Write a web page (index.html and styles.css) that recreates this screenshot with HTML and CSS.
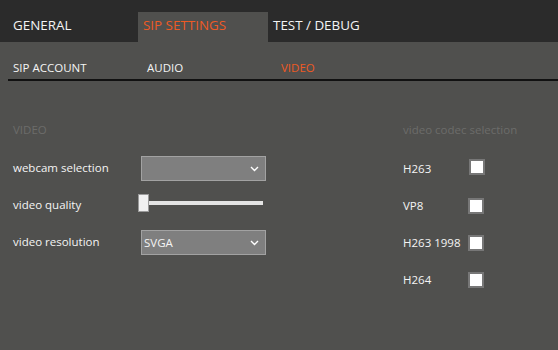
FILE: index.html
```html
<!DOCTYPE html>
<html lang="en">
<head>
    <meta charset="UTF-8">
    <title>SIP Settings - Video</title>
    <link rel="stylesheet" href="styles.css">
</head>
<body>
    <nav class="topbar">
        <div class="tab">GENERAL</div>
        <div class="tab active">SIP SETTINGS</div>
        <div class="tab">TEST / DEBUG</div>
    </nav>

    <nav class="subtabs">
        <div class="subtab">SIP ACCOUNT</div>
        <div class="subtab">AUDIO</div>
        <div class="subtab active">VIDEO</div>
    </nav>

    <main class="panel">
        <section class="video-settings">
            <h2 class="section-title">VIDEO</h2>

            <div class="row">
                <label class="row-label">webcam selection</label>
                <div class="dropdown">
                    <span class="dropdown-value"></span>
                    <svg class="chevron" width="9" height="6" viewBox="0 0 9 6"><polyline points="1,1 4.5,4.5 8,1" fill="none" stroke="#fff" stroke-width="1.4"/></svg>
                </div>
            </div>

            <div class="row">
                <label class="row-label">video quality</label>
                <div class="slider">
                    <div class="slider-thumb"></div>
                    <div class="slider-track"></div>
                </div>
            </div>

            <div class="row">
                <label class="row-label">video resolution</label>
                <div class="dropdown">
                    <span class="dropdown-value">SVGA</span>
                    <svg class="chevron" width="9" height="6" viewBox="0 0 9 6"><polyline points="1,1 4.5,4.5 8,1" fill="none" stroke="#fff" stroke-width="1.4"/></svg>
                </div>
            </div>
        </section>

        <section class="codec-settings">
            <h2 class="section-title lower">video codec selection</h2>

            <div class="row codec-row">
                <span class="codec-label">H263</span>
                <span class="checkbox first"></span>
            </div>
            <div class="row codec-row">
                <span class="codec-label">VP8</span>
                <span class="checkbox"></span>
            </div>
            <div class="row codec-row">
                <span class="codec-label">H263 1998</span>
                <span class="checkbox"></span>
            </div>
            <div class="row codec-row">
                <span class="codec-label">H264</span>
                <span class="checkbox"></span>
            </div>
        </section>
    </main>
</body>
</html>
```

FILE: styles.css
```css
:root {
    --bg: #50504e;
    --bar-bg: #2b2b2b;
    --accent: #ee5a24;
    --text: #f4f4f4;
    --muted: #6c6c6a;
    --field-bg: #7f7f7f;
    --field-border: #a2a2a2;
}

* {
    margin: 0;
    padding: 0;
    box-sizing: border-box;
}

body {
    font-family: 'Open Sans', 'Noto Sans', sans-serif;
    background-color: var(--bg);
    color: var(--text);
    width: 558px;
    height: 350px;
    overflow: hidden;
}

.topbar {
    background: var(--bar-bg);
    height: 42px;
    padding-left: 8px;
    display: flex;
    align-items: flex-end;
}

.tab {
    width: 130px;
    height: 30px;
    padding-left: 5px;
    font-size: 13.4px;
    line-height: 26px;
}

.tab.active {
    background: var(--bg);
    color: var(--accent);
}

.subtabs {
    display: flex;
    margin-left: 8px;
    padding-top: 18px;
    padding-bottom: 3px;
    border-bottom: 2px solid #111;
}

.subtab {
    width: 134px;
    padding-left: 5px;
    font-size: 11.5px;
    line-height: 16px;
}

.subtab.active {
    color: var(--accent);
}

.panel {
    display: flex;
    padding: 41px 0 0 13px;
}

.video-settings {
    width: 390px;
}

.section-title {
    font-size: 11.5px;
    font-weight: normal;
    line-height: 16px;
    color: var(--muted);
    margin-bottom: 12px;
}

.row {
    height: 37px;
    display: flex;
    align-items: center;
}

.row-label {
    width: 128px;
    font-size: 11.5px;
    line-height: 16px;
    padding-bottom: 1px;
}

.dropdown {
    width: 125px;
    height: 25px;
    background: var(--field-bg);
    border: 1px solid var(--field-border);
    display: flex;
    align-items: center;
    justify-content: space-between;
    padding: 0 6px 0 2px;
    font-size: 11.5px;
}

.chevron {
    margin-top: 1px;
}

.slider {
    display: flex;
    align-items: center;
    margin-left: -3px;
    margin-bottom: 6px;
}

.slider-thumb {
    width: 11px;
    height: 18px;
    background: #f0f0f0;
    border: 1px solid #9a9a9a;
}

.slider-track {
    width: 114px;
    height: 4px;
    background: #e4e4e4;
}

.codec-label {
    width: 65px;
    font-size: 11.5px;
    line-height: 16px;
}

.checkbox {
    width: 16px;
    height: 16px;
    background: #fff;
    border: 2px solid #777;
}

.checkbox.first {
    margin-left: 1px;
    margin-bottom: 3px;
}
```
